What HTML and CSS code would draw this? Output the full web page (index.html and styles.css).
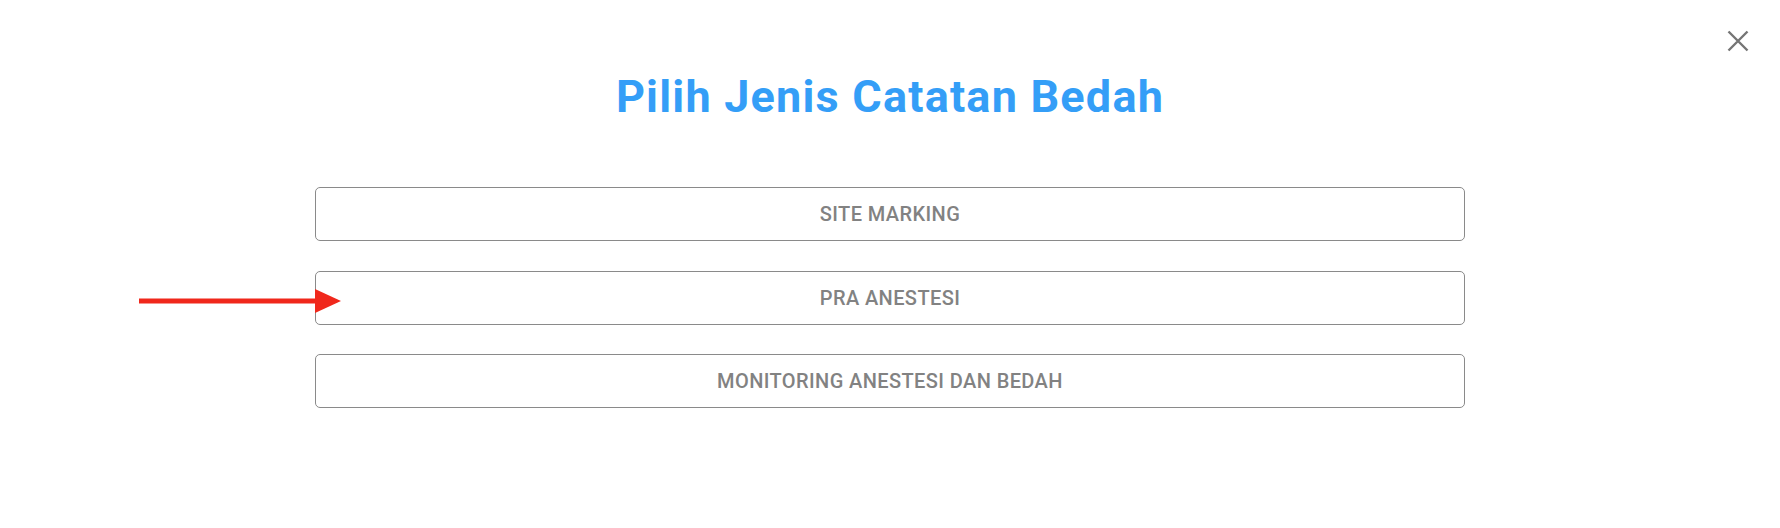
FILE: index.html
```html
<!DOCTYPE html>
<html lang="id">
<head>
<meta charset="utf-8">
<title>Pilih Jenis Catatan Bedah</title>
<link rel="stylesheet" href="styles.css">
</head>
<body>
<div class="dialog">
  <button class="close" aria-label="Tutup">
    <svg width="22" height="22" viewBox="0 0 22 22"><path d="M1.5 1.5 L20.5 20.5 M20.5 1.5 L1.5 20.5" stroke="#757575" stroke-width="2.4" fill="none"/></svg>
  </button>
  <h1 class="title">Pilih Jenis Catatan Bedah</h1>
  <div class="options">
    <button class="option">SITE MARKING</button>
    <div class="option-wrap">
      <button class="option">PRA ANESTESI</button>
      <div class="pointer">
        <svg width="202" height="26" viewBox="0 0 202 26"><rect x="0" y="10.5" width="180" height="5" fill="#f0281c"/><polygon points="176,1 202,13 176,25" fill="#f0281c"/></svg>
      </div>
    </div>
    <button class="option">MONITORING ANESTESI DAN BEDAH</button>
  </div>
</div>
</body>
</html>
```
FILE: styles.css
```css
html, body {
  margin: 0;
  padding: 0;
  background: #ffffff;
}
body {
  font-family: Roboto, "Liberation Sans", Arial, sans-serif;
  width: 1780px;
  height: 528px;
  overflow: hidden;
}
.dialog {
  position: relative;
  height: 528px;
  display: flex;
  flex-direction: column;
  align-items: center;
}
.close {
  position: absolute;
  top: 30px;
  left: 1727px;
  width: 22px;
  height: 22px;
  padding: 0;
  border: 0;
  background: transparent;
  cursor: pointer;
}
.close svg { display: block; }
.title {
  margin: 71px 0 0 0;
  font-size: 45px;
  line-height: 52px;
  font-weight: 700;
  letter-spacing: 1.2px;
  color: #349ef7;
}
.options {
  margin-top: 64px;
  width: 1150px;
  display: flex;
  flex-direction: column;
  gap: 30px;
}
.option-wrap {
  position: relative;
}
.option-wrap + .option {
  margin-top: -1px;
}
.option {
  display: block;
  width: 100%;
  height: 54px;
  box-sizing: border-box;
  border: 1px solid #8a8a8a;
  border-radius: 5px;
  background: #ffffff;
  color: #828282;
  font-family: Roboto, "Liberation Sans", Arial, sans-serif;
  font-size: 20px;
  font-weight: 500;
  letter-spacing: 0.4px;
  cursor: pointer;
}
.pointer {
  position: absolute;
  left: -176px;
  top: 17px;
  line-height: 0;
}
```
